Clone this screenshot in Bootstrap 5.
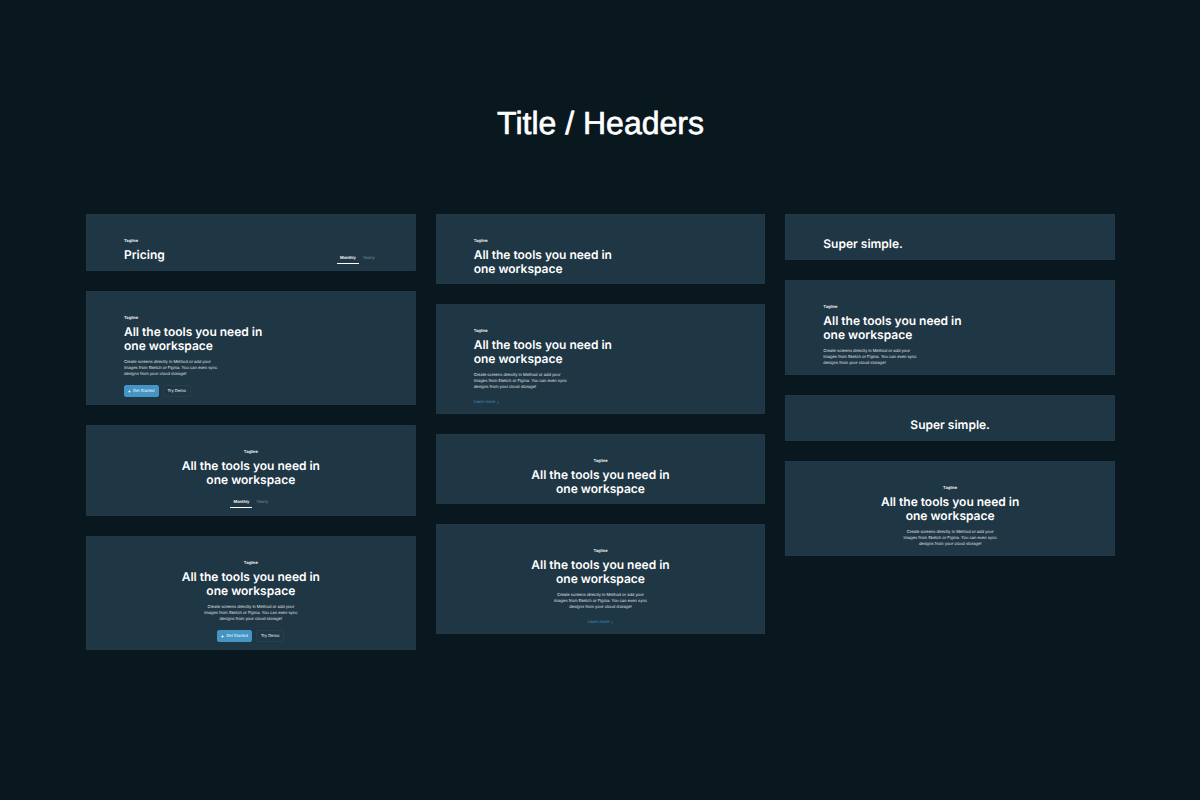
<!DOCTYPE html>
<html lang="en">
<head>
<meta charset="utf-8">
<meta name="viewport" content="width=device-width, initial-scale=1">
<title>Title / Headers</title>
<link href="https://cdn.jsdelivr.net/npm/bootstrap@5.3.0/dist/css/bootstrap.min.css" rel="stylesheet">
<style>
  body, button { text-rendering: geometricPrecision; }
  body { background: #09171f; color: #fff; font-family: Inter, "Liberation Sans", sans-serif; }
  .page-title { font: 400 32px/42px "Liberation Sans", Arial, sans-serif; -webkit-text-stroke: 0.02em #fff; }
  .sheet { padding: 102px 85px 40px 86px; }
  .board { --bs-gutter-x: 20px; --bs-gutter-y: 20px; margin-top: 50px; }
  .stack { gap: 20px; }
  .panel { background: #1f3644; padding: 23px 38px 8px; box-shadow: inset 0 0 0 1px #213946; }
  .panel-plain { padding-bottom: 9px; }
  .panel-split { padding-bottom: 7px; }
  .panel-split .headline { margin-bottom: 2px; }
  .tagline { font-size: 4px; line-height: 8px; font-weight: 600; margin: 0 0 3px; }
  .headline { font-size: 12px; line-height: 14px; font-weight: 600; margin: 0; }
  .copy { font-size: 4px; line-height: 6px; color: #e4e9ec; margin: 6px 0 0; padding-bottom: 1px; }
  .actions { gap: 4px; margin-top: 7px; }
  .action { --bs-btn-font-size: 4px; --bs-btn-line-height: 10px; --bs-btn-padding-y: 0; --bs-btn-padding-x: 4px; --bs-btn-border-radius: 2px; --bs-btn-font-weight: 400; --bs-btn-color: #fff; --bs-btn-border-color: #263f4e; gap: 2px; }
  .action-main { --bs-btn-bg: #4494c4; --bs-btn-border-color: #4494c4; --bs-btn-padding-x: 3px; }
  .more { font-size: 4px; line-height: 8px; color: #4494c4; margin-top: 7px; gap: 2px; text-decoration: none; }
  .tabs { gap: 1px; }
  .tab { font-size: 4px; line-height: 10px; padding: 0 3px; border: 0; border-bottom: 1px solid transparent; background: none; color: #84919a; }
  .tab.active { color: #fff; font-weight: 600; border-bottom-color: #fff; }
  .text-center .tabs { margin-top: 10px; }
</style>
</head>
<body>
<main class="sheet container-fluid">
  <h1 class="page-title text-center mb-0">Title / Headers</h1>
  <div class="board row">
    <div class="col-md-4 d-flex flex-column stack">
      <section class="panel panel-split d-flex justify-content-between align-items-end">
        <div><p class="tagline">Tagline</p><h2 class="headline">Pricing</h2></div>
        <div class="tabs d-flex" role="tablist"><button type="button" role="tab" aria-selected="true" class="tab active">Monthly</button><button type="button" role="tab" aria-selected="false" class="tab">Yearly</button></div>
      </section>
      <section class="panel">
        <p class="tagline">Tagline</p>
        <h2 class="headline">All the tools you need in<br>one workspace</h2>
        <p class="copy">Create screens directly in Method or add your<br>images from Sketch or Figma. You can even sync<br>designs from your cloud storage!</p>
        <div class="actions d-flex">
          <button type="button" class="btn action action-main d-flex align-items-center"><svg width="3" height="3" viewBox="0 0 10 10" fill="#fff" aria-hidden="true"><path d="M5 0l1.600 3.300L10 5 6.600 6.700 5 10 3.400 6.700 0 5l3.400-1.700z"/></svg>Get Started</button>
          <button type="button" class="btn action">Try Demo</button>
        </div>
      </section>
      <section class="panel text-center">
        <p class="tagline">Tagline</p>
        <h2 class="headline">All the tools you need in<br>one workspace</h2>
        <div class="tabs d-flex justify-content-center" role="tablist"><button type="button" role="tab" aria-selected="true" class="tab active">Monthly</button><button type="button" role="tab" aria-selected="false" class="tab">Yearly</button></div>
      </section>
      <section class="panel text-center">
        <p class="tagline">Tagline</p>
        <h2 class="headline">All the tools you need in<br>one workspace</h2>
        <p class="copy">Create screens directly in Method or add your<br>images from Sketch or Figma. You can even sync<br>designs from your cloud storage!</p>
        <div class="actions d-flex justify-content-center">
          <button type="button" class="btn action action-main d-flex align-items-center"><svg width="3" height="3" viewBox="0 0 10 10" fill="#fff" aria-hidden="true"><path d="M5 0l1.600 3.300L10 5 6.600 6.700 5 10 3.400 6.700 0 5l3.400-1.700z"/></svg>Get Started</button>
          <button type="button" class="btn action">Try Demo</button>
        </div>
      </section>
    </div>
    <div class="col-md-4 d-flex flex-column stack">
      <section class="panel">
        <p class="tagline">Tagline</p>
        <h2 class="headline">All the tools you need in<br>one workspace</h2>
      </section>
      <section class="panel">
        <p class="tagline">Tagline</p>
        <h2 class="headline">All the tools you need in<br>one workspace</h2>
        <p class="copy">Create screens directly in Method or add your<br>images from Sketch or Figma. You can even sync<br>designs from your cloud storage!</p>
        <a href="#" class="more d-flex align-items-center">Learn more <svg width="2" height="3" viewBox="0 0 4 6" fill="none" stroke="currentColor" aria-hidden="true"><path d="M.5.5L3 3 .5 5.500"/></svg></a>
      </section>
      <section class="panel text-center">
        <p class="tagline">Tagline</p>
        <h2 class="headline">All the tools you need in<br>one workspace</h2>
      </section>
      <section class="panel text-center">
        <p class="tagline">Tagline</p>
        <h2 class="headline">All the tools you need in<br>one workspace</h2>
        <p class="copy">Create screens directly in Method or add your<br>images from Sketch or Figma. You can even sync<br>designs from your cloud storage!</p>
        <a href="#" class="more d-flex align-items-center justify-content-center">Learn more <svg width="2" height="3" viewBox="0 0 4 6" fill="none" stroke="currentColor" aria-hidden="true"><path d="M.5.5L3 3 .5 5.500"/></svg></a>
      </section>
    </div>
    <div class="col-md-4 d-flex flex-column stack">
      <section class="panel panel-plain"><h2 class="headline">Super simple.</h2></section>
      <section class="panel">
        <p class="tagline">Tagline</p>
        <h2 class="headline">All the tools you need in<br>one workspace</h2>
        <p class="copy">Create screens directly in Method or add your<br>images from Sketch or Figma. You can even sync<br>designs from your cloud storage!</p>
      </section>
      <section class="panel panel-plain text-center"><h2 class="headline">Super simple.</h2></section>
      <section class="panel text-center">
        <p class="tagline">Tagline</p>
        <h2 class="headline">All the tools you need in<br>one workspace</h2>
        <p class="copy">Create screens directly in Method or add your<br>images from Sketch or Figma. You can even sync<br>designs from your cloud storage!</p>
      </section>
    </div>
  </div>
</main>
<script src="https://cdn.jsdelivr.net/npm/bootstrap@5.3.0/dist/js/bootstrap.bundle.min.js"></script>
</body>
</html>
